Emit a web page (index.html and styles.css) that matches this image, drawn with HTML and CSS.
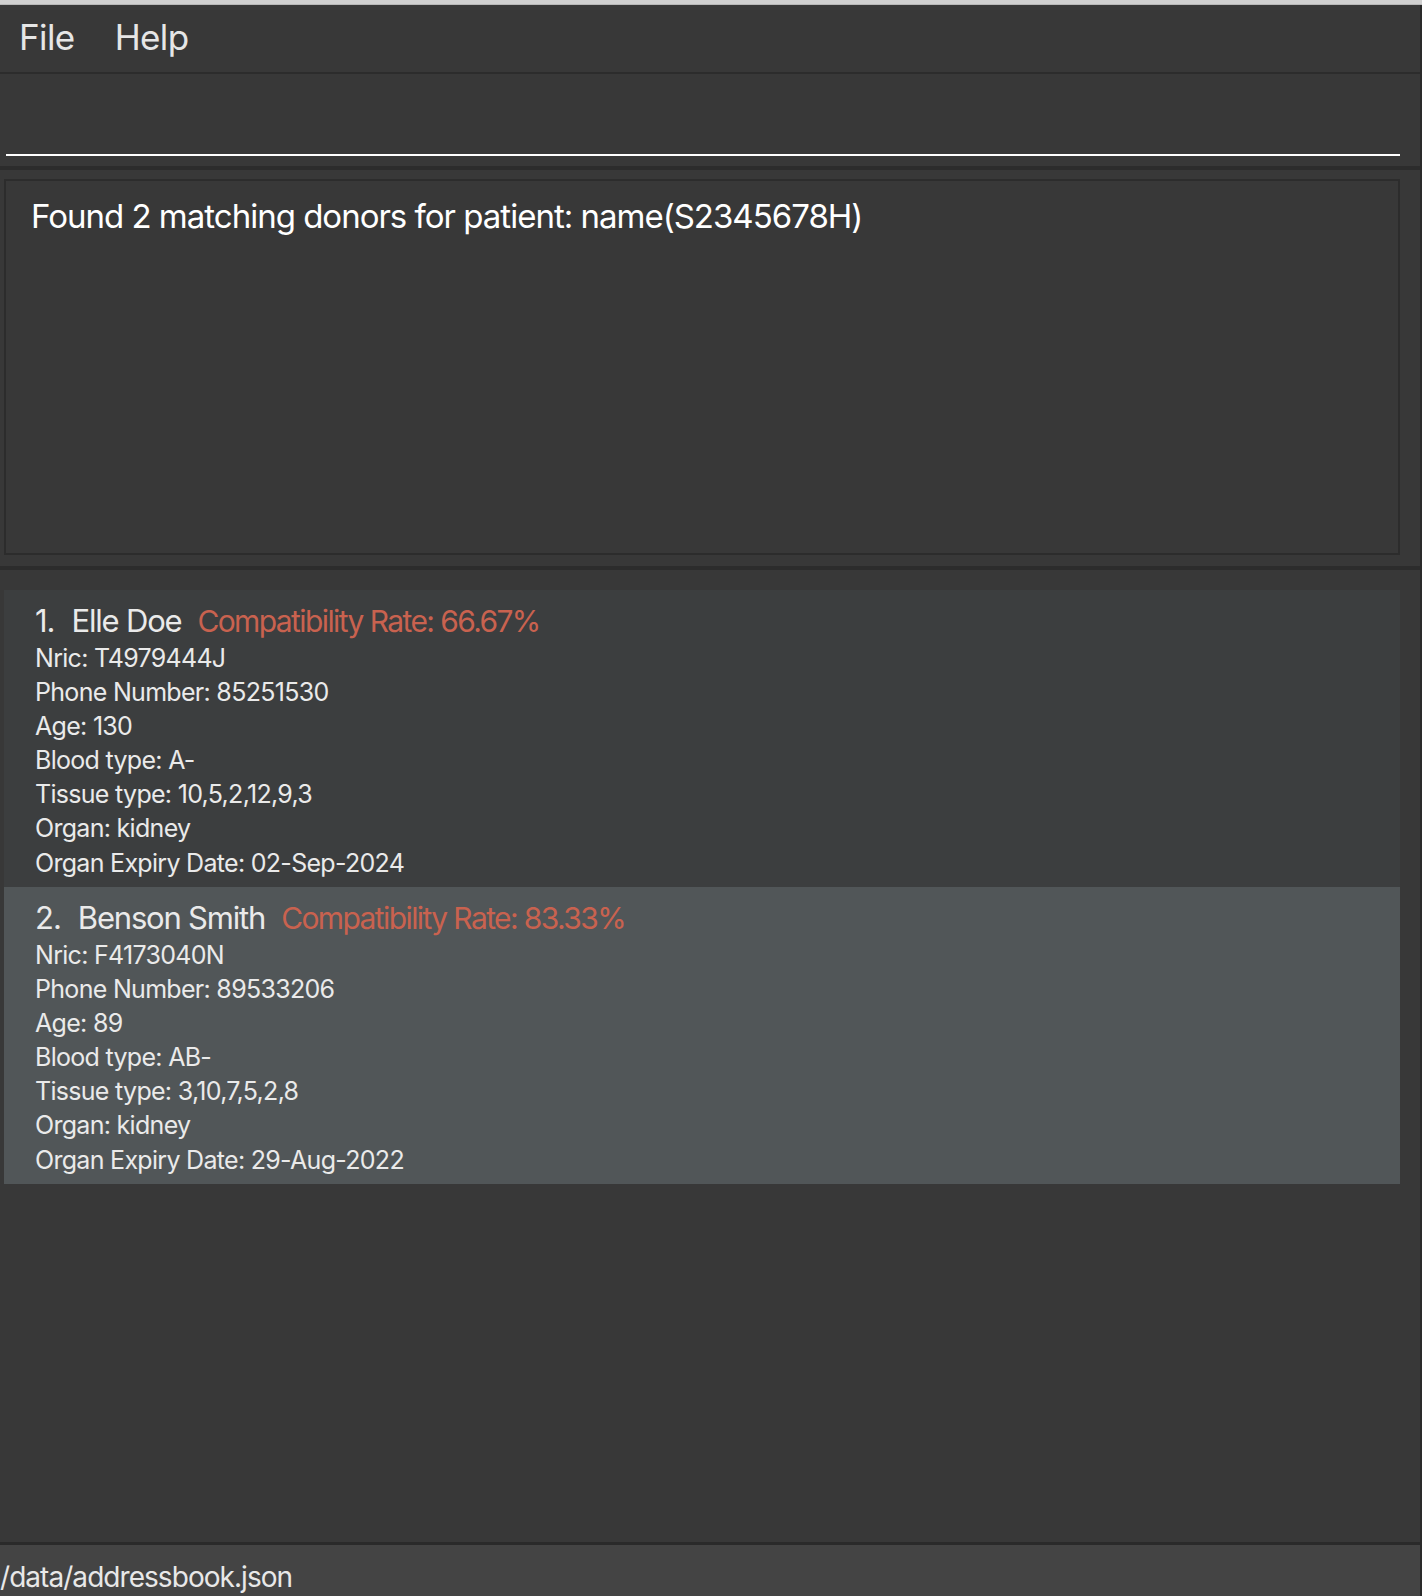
FILE: index.html
```html
<!DOCTYPE html>
<html>
<head>
<meta charset="utf-8">
<link rel="stylesheet" href="styles.css">
</head>
<body>
<div class="topstrip"></div>
<div class="app">
  <div class="menubar">
    <span class="menu-item">File</span>
    <span class="menu-item">Help</span>
  </div>
  <div class="command">
    <div class="command-input"></div>
  </div>
  <div class="sep"></div>
  <div class="result-pane">
    <div class="result-box">Found 2 matching donors for patient: name(S2345678H)</div>
  </div>
  <div class="sep"></div>
  <div class="list-pane">
    <div class="card card-even">
      <div class="card-head"><span class="card-id">1.</span><span class="card-name">Elle Doe</span><span class="card-rate">Compatibility Rate: 66.67%</span></div>
      <div class="card-line">Nric: T4979444J</div>
      <div class="card-line">Phone Number: 85251530</div>
      <div class="card-line">Age: 130</div>
      <div class="card-line">Blood type: A-</div>
      <div class="card-line">Tissue type: 10,5,2,12,9,3</div>
      <div class="card-line">Organ: kidney</div>
      <div class="card-line">Organ Expiry Date: 02-Sep-2024</div>
    </div>
    <div class="card card-odd">
      <div class="card-head"><span class="card-id">2.</span><span class="card-name">Benson Smith</span><span class="card-rate">Compatibility Rate: 83.33%</span></div>
      <div class="card-line">Nric: F4173040N</div>
      <div class="card-line">Phone Number: 89533206</div>
      <div class="card-line">Age: 89</div>
      <div class="card-line">Blood type: AB-</div>
      <div class="card-line">Tissue type: 3,10,7,5,2,8</div>
      <div class="card-line">Organ: kidney</div>
      <div class="card-line">Organ Expiry Date: 29-Aug-2022</div>
    </div>
  </div>
  <div class="status">
    <span class="status-text">/data/addressbook.json</span>
  </div>
</div>
</body>
</html>
```
FILE: styles.css
```css
html, body {
  margin: 0;
  padding: 0;
  background: #383838;
  font-family: Inter, "Open Sans", sans-serif;
  color: #e8e8e8;
}

.topstrip {
  height: 5px;
  background: #d0d0d0;
  border-bottom: 1px solid #b8b8b8;
  box-sizing: border-box;
}

.app {
  height: 1591px;
  display: flex;
  flex-direction: column;
  border-right: 2px solid #2a2a2a;
  box-sizing: border-box;
}

.menubar {
  height: 69px;
  flex: none;
  box-sizing: border-box;
  border-bottom: 2px solid #2c2c2c;
  display: flex;
  align-items: center;
  gap: 40px;
  padding: 0 0 3px 19px;
  font-size: 35px;
  letter-spacing: -0.6px;
  color: #e6e6e6;
}

.command {
  height: 92px;
  flex: none;
  padding: 0 20px 10px 6px;
  box-sizing: border-box;
  display: flex;
  align-items: flex-end;
}

.command-input {
  flex: 1;
  height: 2px;
  background: #ffffff;
}

.sep {
  height: 4px;
  flex: none;
  background: #2c2c2c;
}

.result-pane {
  flex: none;
  padding: 9px 20px 11px 4px;
}

.result-box {
  height: 376px;
  box-sizing: border-box;
  border: 2px solid #2c2c2c;
  padding: 15px 0 0 25px;
  font-size: 33px;
  color: #ffffff;
  letter-spacing: -1px;
}

.list-pane {
  flex: 1;
  padding: 20px 20px 0 4px;
}

.card {
  height: 297px;
  box-sizing: border-box;
  padding: 10px 0 0 31px;
  color: #eaeaea;
}

.card-even {
  background: #3c3e3f;
}

.card-odd {
  background: #515658;
}

.card-head {
  font-size: 31px;
  line-height: 41px;
  height: 41px;
  display: flex;
  align-items: baseline;
}

.card-id {
  margin-right: 17px;
  letter-spacing: -1px;
}

.card-name {
  margin-right: 16px;
  letter-spacing: -1.2px;
}

.card-rate {
  color: #c9624f;
  font-size: 30px;
  letter-spacing: -1.6px;
}

.card-line {
  font-size: 25px;
  line-height: 34.1px;
  letter-spacing: -0.7px;
}

.status {
  height: 54px;
  flex: none;
  box-sizing: border-box;
  border-top: 3px solid #2a2a2a;
  background: #444444;
  overflow: hidden;
  font-size: 28px;
  line-height: 34px;
  color: #e8e8e8;
  padding-top: 15px;
  letter-spacing: -0.95px;
}

.status-text {
  display: block;
}
```
